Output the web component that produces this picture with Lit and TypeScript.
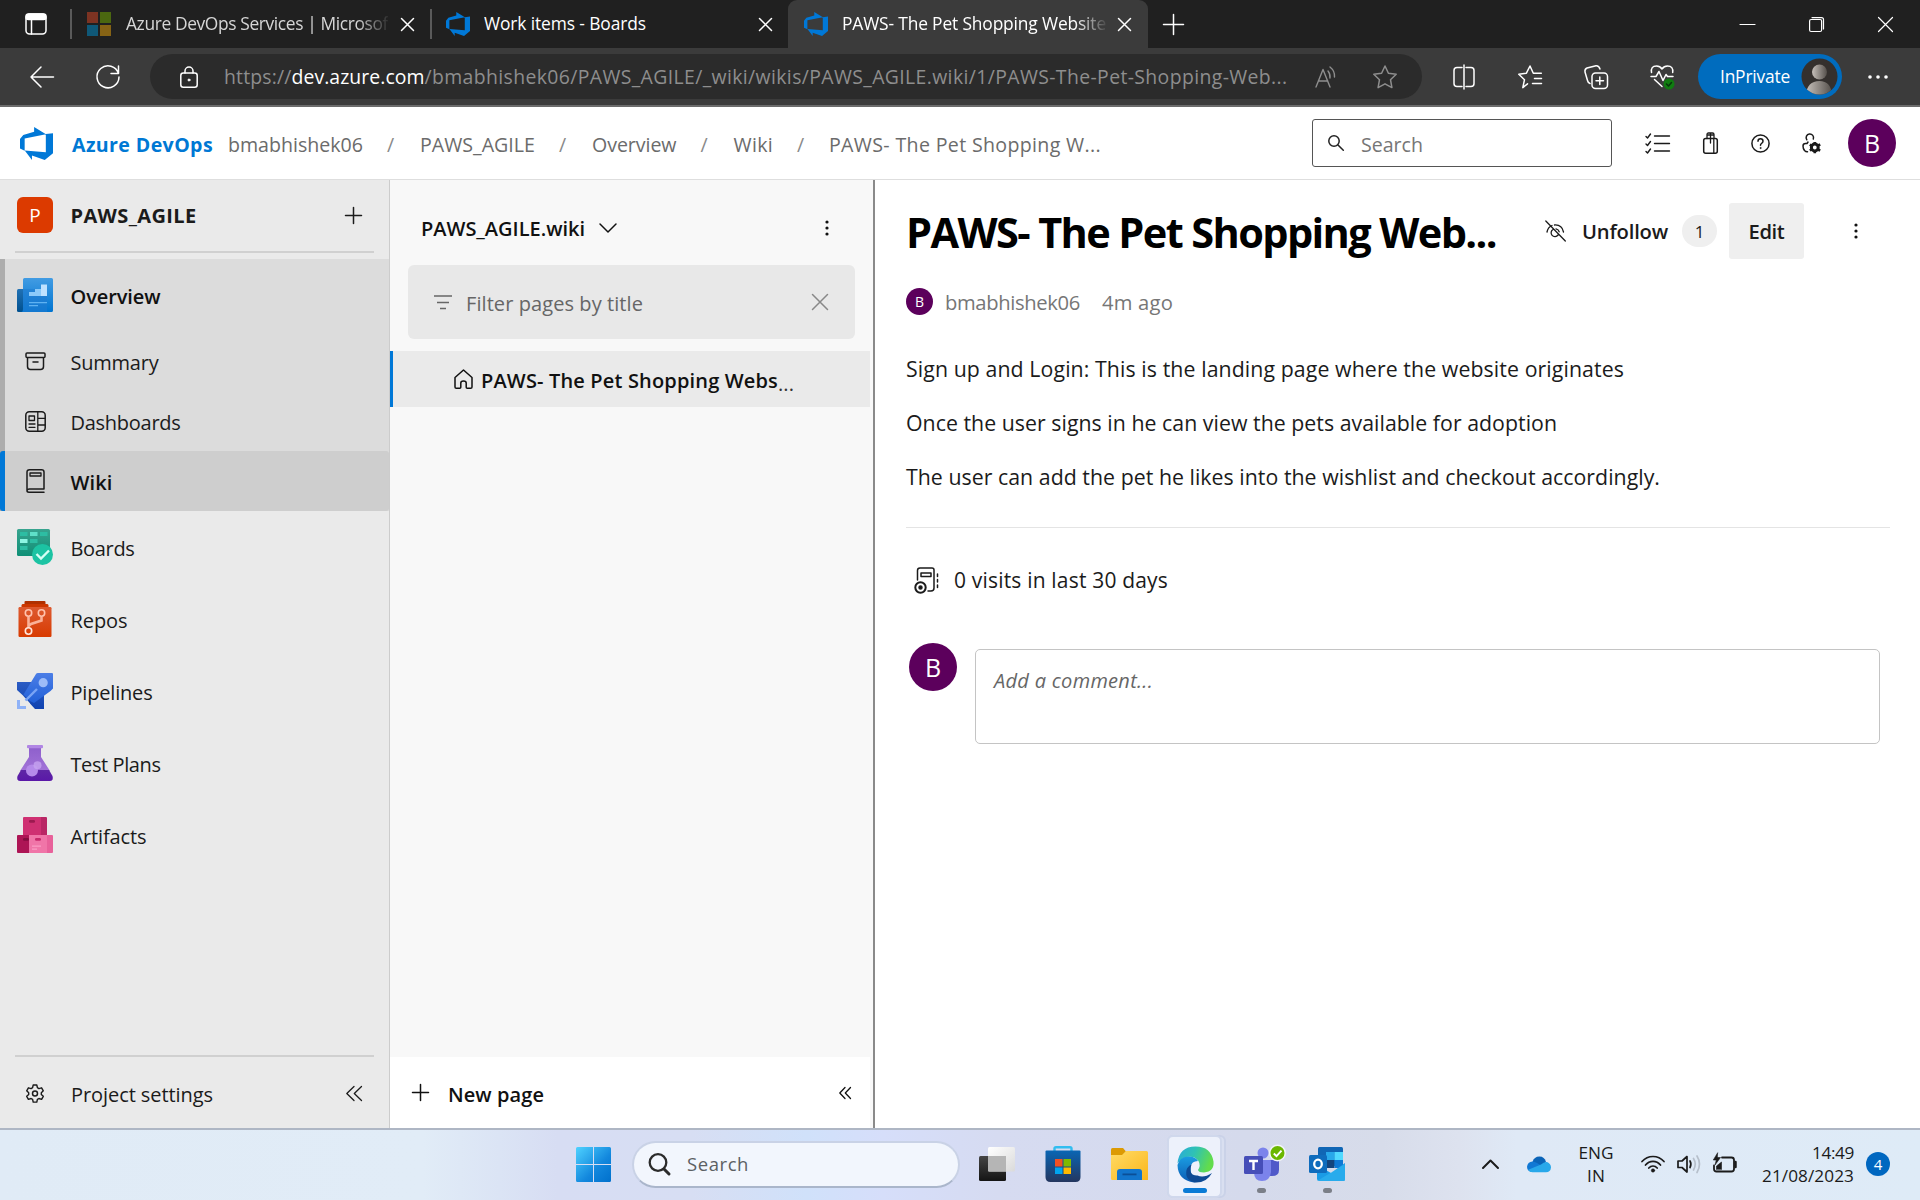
import { LitElement, html, svg, css } from "lit";
import { customElement, property } from "lit/decorators.js";

/** Single-line label whose tracking is tuned so that it fills `w` pixels. */
@customElement("ui-text")
class UiText extends LitElement {
  @property({ type: Number }) w = 0;
  static styles = css`
    :host { display: inline-block; flex: none; white-space: pre; line-height: 1.36; padding-top: 1px; }
    span { display: inline-block; }
  `;
  firstUpdated() {
    const span = this.renderRoot.querySelector("span") as HTMLElement;
    const count = (this.textContent ?? "").length;
    if (!this.w || !count) return;
    const natural = span.getBoundingClientRect().width;
    span.style.letterSpacing = `${(this.w - natural) / count}px`;
    this.style.width = `${this.w}px`;
  }
  render() {
    return html`<span><slot></slot></span>`;
  }
}

const shared = css`
  * { box-sizing: border-box; }
  :host { display: block; box-sizing: border-box; }
  svg { display: block; flex: none; overflow: visible; }
  .row { display: flex; align-items: center; }
  .ln { fill: none; stroke: currentColor; stroke-linecap: round; stroke-linejoin: round; }
`;

const icon = (w: number, h: number, body: unknown, cls = "") =>
  html`<svg class=${"ln " + cls} width=${w} height=${h} viewBox="0 0 ${w} ${h}" stroke-width="1.5">${body}</svg>`;

const devopsLogo = (size: number, cls = "") => html`
  <svg class=${cls} width=${size} height=${size} viewBox="1 1 16 16" fill="#0078d7">
    <path d="M17,4v9.74l-4,3.28-6.2-2.26V17L3.29,12.41l10.23.8V4.44Zm-3.41.49L7.85,1V3.29L2.58,4.84,1,6.87v4.61l2.26,1V6.57Z"></path>
  </svg>`;

const cross = (size: number, sw = 1.5) =>
  svg`<path stroke-width=${sw} d="M.5 .5L${size - 0.5} ${size - 0.5}M${size - 0.5} .5L.5 ${size - 0.5}"></path>`;

@customElement("browser-chrome")
class BrowserChrome extends LitElement {
  static styles = [shared, css`
    :host { color: #fff; background: #3b3b3b; height: 107px; border-bottom: 2px solid #6b6b6b; }
    .tabs { height: 48px; background: #202020; font-size: 17.4px; }
    .tabs ui-text { padding-top: 0; }
    .workspaces { margin-left: 25px; }
    .sep { width: 2px; height: 30px; background: #5a5a5a; }
    .sep.first { margin-left: 23px; }
    .tab { height: 48px; }
    .tab .fav { margin-right: 14px; }
    .tab ui-text { overflow: hidden; }
    .tab .close { margin-left: auto; }
    .tab.one { width: 358px; padding: 0 16px 0 15px; }
    .tab.one .fav { margin-right: 15px; }
    .tab.one ui-text { color: #d6d6d6; }
    .tab.two { width: 356px; padding: 0 16px 0 14px; }
    .tab.active { width: 360px; padding: 0 17px 0 16px; background: #3b3b3b; border-radius: 9px 9px 0 0; }
    .fade { -webkit-mask-image: linear-gradient(90deg, #000 88%, transparent 101%); }
    .plus { margin-left: 15px; }
    .min { margin-left: auto; }
    .restore { margin-left: 54px; }
    .shut { margin: 0 27px 0 54px; }
    .bar { height: 57px; }
    .back { margin-left: 30px; }
    .reload { margin: 0 30px 0 42px; }
    .omni { width: 1272px; height: 45px; border-radius: 23px; background: #2b2b2b; padding: 0 26px 0 30px; font-size: 19.4px; color: #8e8e8e; }
    .lock { margin-right: 26px; color: #fff; }
    .host { color: #fff; }
    .aloud { margin-left: 27px; }
    .star { margin-left: 36px; }
    .split { margin-left: 31px; }
    .favs { margin-left: 43px; }
    .coll { margin-left: 42px; }
    .heart { margin-left: 42px; }
    .pill { margin-left: 24px; width: 144px; height: 45px; border-radius: 23px; background: #006cbe; padding: 0 4px 0 22px; justify-content: space-between; font-size: 17.4px; }
    .dots { margin-left: 26px; }
  `];
  render() {
    return html`
      <div class="row tabs">
        ${icon(22, 22, svg`<rect x="1" y="1" width="20" height="20" rx="3.5"></rect><path d="M6.5 6v15"></path><rect x="1" y="1" width="20" height="5.500" rx="2.500" fill="#fff"></rect>`, "workspaces")}
        <div class="sep first"></div>
        <div class="row tab one">
          <svg class="fav" width="24" height="24" viewBox="0 0 24 24"><path fill="#7d3322" d="M0 0h11v11H0z"></path><path fill="#4b6710" d="M13 0h11v11H13z"></path><path fill="#0f5878" d="M0 13h11v11H0z"></path><path fill="#866315" d="M13 13h11v11H13z"></path></svg>
          <ui-text class="fade" .w=${262}>Azure DevOps Services | Microsof</ui-text>
          ${icon(13, 13, cross(13), "close")}
        </div>
        <div class="sep"></div>
        <div class="row tab two">${devopsLogo(24, "fav")}<ui-text .w=${162}>Work items - Boards</ui-text>${icon(13, 13, cross(13), "close")}</div>
        <div class="row tab active">${devopsLogo(24, "fav")}<ui-text class="fade" .w=${264}>PAWS- The Pet Shopping Website</ui-text>${icon(13, 13, cross(13), "close")}</div>
        ${icon(21, 21, svg`<path d="M10.500 0.500v20M0.500 10.500h20"></path>`, "plus")}
        ${icon(15, 15, svg`<path stroke-width="1.200" d="M0 7.500h15"></path>`, "min")}
        ${icon(15, 15, svg`<rect x=".6" y="2.500" width="12" height="12" rx="1.500" stroke-width="1.200"></rect><path stroke-width="1.200" d="M3 .6h9.500q2 0 2 2V12"></path>`, "restore")}
        ${icon(15, 15, cross(15, 1.2), "shut")}
      </div>
      <div class="row bar">
        ${icon(24, 22, svg`<path d="M23.500 11H1M11 1L1 11l10 10"></path>`, "back")}
        ${icon(24, 24, svg`<path d="M22.500 8.500A11 11 0 1 0 23 12M22.500 1v7.500H15"></path>`, "reload")}
        <div class="row omni">
          ${icon(18, 22, svg`<rect x=".8" y="7" width="16.400" height="14.200" rx="2.500"></rect><path d="M5 7V5a4 4 0 0 1 8 0v2"></path><circle cx="9" cy="14" r="1" fill="#fff" stroke-width="1"></circle>`, "lock")}
          <ui-text .w=${67.5}>https://</ui-text><ui-text class="host" .w=${133}>dev.azure.com</ui-text><ui-text .w=${863}>/bmabhishek06/PAWS_AGILE/_wiki/wikis/PAWS_AGILE.wiki/1/PAWS-The-Pet-Shopping-Web...</ui-text>
          ${icon(22, 22, svg`<path stroke-width="1.400" d="M1 21L8 3.500 15 21M3.300 15h9.500M13 5q2.500 3 2 7M15 1q5 4 4.500 10"></path>`, "aloud")}
          ${icon(24, 24, svg`<path d="M12 1l3.400 7.200 7.800 1-5.700 5.500 1.400 7.900L12 18.800l-6.900 3.800 1.400-7.900L.8 9.200l7.800-1z"></path>`, "star")}
        </div>
        ${icon(22, 24, svg`<path d="M9 2.500H4Q1 2.500 1 5.500v13q0 3 3 3h5M13 2.500h5q3 0 3 3v13q0 3-3 3h-5M11 0v24"></path>`, "split")}
        ${icon(24, 24, svg`<path d="M9.500 18.800L4.800 22.600l1.700-7.900L.8 9.200l7.600-1L12 1l3.300 7.200h8M16.500 13.500h7M14.500 18.500h9"></path>`, "favs")}
        ${icon(24, 24, svg`<rect x="8" y="8" width="15.500" height="15.500" rx="3.500"></rect><path d="M15.800 12v7.500M12 15.800h7.500M6 18.500Q4 18 3.500 15.500L1 7q-.5-3 2-4l9-2.300Q15 .5 16 4"></path>`, "coll")}
        ${icon(24, 25, svg`<path d="M1.500 8.500Q.5 2 6.500 2 10 2 12 5q2-3 5.500-3 6 0 5.200 6.500M1 12.500h5l3-5 4 9 3-6 1.500 2h5.500M4.500 15.500L12 22.500"></path><circle cx="19" cy="20" r="5.500" fill="#107c10" stroke="none"></circle><path d="M16.500 20l2 2 3-3.500" stroke="#07350a"></path>`, "heart")}
        <div class="row pill">
          <ui-text .w=${70}>InPrivate</ui-text>
          <svg width="37" height="37" viewBox="0 0 37 37">
            <defs><linearGradient id="ag"><stop offset="0" stop-color="#c6c0ba"></stop><stop offset="1" stop-color="#55504b"></stop></linearGradient><clipPath id="ac"><circle cx="18.500" cy="18.500" r="18"></circle></clipPath></defs>
            <circle cx="18.500" cy="18.500" r="18" fill="#34302d"></circle>
            <g clip-path="url(#ac)" fill="url(#ag)"><circle cx="18.500" cy="14" r="7.500"></circle><path d="M5 37q1-14 13.500-14Q30 23 31 37z"></path></g>
          </svg>
        </div>
        ${icon(20, 4, svg`<g fill="#fff" stroke="none"><circle cx="2" cy="2" r="1.800"></circle><circle cx="10" cy="2" r="1.800"></circle><circle cx="18" cy="2" r="1.800"></circle></g>`, "dots")}
      </div>`;
  }
}

@customElement("devops-header")
class DevopsHeader extends LitElement {
  static styles = [shared, css`
    :host { height: 73px; border-bottom: 1px solid #dedede; background: #fff; color: #6b6b6b; font-size: 19.6px; }
    .row { height: 72px; }
    ui-text { padding-top: 4px; }
    .logo { margin: 0 19px 0 20px; }
    .brand { color: #0078d4; font-weight: 700; margin-right: 15px; }
    .sl { margin: 0 24px; color: #8a8a8a; }
    .sl.last { margin-right: 23px; }
    .find { width: 300px; height: 48px; border: 1px solid #555; border-radius: 3px; margin-left: auto; padding-left: 15px; color: #767676; }
    .find svg { color: #222; margin-right: 17px; }
    .ic { color: #1a1a1a; }
    .list { margin-left: 33px; }
    .bag { margin-left: 33px; }
    .help { margin-left: 33px; }
    .user { margin-left: 32px; }
    .me { width: 48px; height: 48px; border-radius: 50%; background: #5c005c; color: #fff; margin: 0 24px 0 27px; display: grid; place-items: center; font-size: 25px; }
  `];
  render() {
    const sl = html`<ui-text class="sl" .w=${9}>/</ui-text>`;
    return html`<div class="row">
      ${devopsLogo(33, "logo")}
      <ui-text class="brand" .w=${141}>Azure DevOps</ui-text>
      <ui-text .w=${135}>bmabhishek06</ui-text>${sl}
      <ui-text .w=${115}>PAWS_AGILE</ui-text>${sl}
      <ui-text .w=${84.5}>Overview</ui-text>${sl}
      <ui-text .w=${39.5}>Wiki</ui-text><ui-text class="sl last" .w=${9}>/</ui-text>
      <ui-text .w=${272}>PAWS- The Pet Shopping W...</ui-text>
      <div class="row find">
        ${icon(16, 16, svg`<circle cx="6" cy="6" r="5.200"></circle><path d="M10 10l5.300 5.300"></path>`)}
        <ui-text .w=${62}>Search</ui-text>
      </div>
      ${icon(25, 20, svg`<path stroke-width="1.400" d="M9.500 3h15M9.500 10.500h15M9.500 18h15M1 3.500l1.500 1.500 3-4M1 11l1.500 1.500 3-4M1 18.500L2.500 20l3-4"></path>`, "ic list")}
      ${icon(15, 22, svg`<rect x=".7" y="6.500" width="13.600" height="14.700" rx="2"></rect><path stroke-width="1.300" d="M4 6.500V2.500Q4 1 5.500 1h4Q11 1 11 2.500v4M7.500 1v10M5 3h5M10.800 7v14"></path>`, "ic bag")}
      ${icon(19, 19, svg`<circle cx="9.500" cy="9.500" r="8.600"></circle><path d="M7 7.300Q7 4.800 9.500 4.800T12 7.200Q12 8.500 10.500 9.500 9.500 10.200 9.500 11.300"></path><circle cx="9.500" cy="14" r=".6" fill="#1a1a1a" stroke-width=".6"></circle>`, "ic help")}
      ${icon(19, 21, svg`<path d="M4.800 6.800a3.700 3.700 0 1 1 6.500-.8M6 9L5 10.500H3.500Q1 10.500 1 13t1.500 4.500Q4 19 5.500 18.800"></path><circle cx="12.800" cy="14.500" r="3.400" stroke-width="3"></circle><path stroke-width="2.600" stroke-linecap="butt" d="M12.800 9v2M12.800 18v2.300M7.800 11.700l2 1.200M16 16.500l2.200 1.200M7.800 17.500l2-1.200M16 12.700l2.200-1.300"></path>`, "ic user")}
      <div class="me">B</div>
    </div>`;
  }
}

const grad = (id: string, a: string, b: string) =>
  svg`<linearGradient id=${id} x1="0" y1="0" x2="0" y2="1"><stop offset="0" stop-color=${a}></stop><stop offset="1" stop-color=${b}></stop></linearGradient>`;
const hub = (body: unknown) => html`<svg width="36" height="36" viewBox="0 0 36 36">${body}</svg>`;

const hubIcons = {
  overview: hub(svg`<defs>${grad("o1", "#429ce3", "#0074d0")}${grad("o2", "#2171b4", "#00508f")}</defs>
    <path fill="url(#o2)" d="M0 13.500q0-1.500 1.500-1.500H8v23H1.500Q0 35 0 33.500z"></path><path fill="url(#o1)" d="M6 2.500Q6 1 7.500 1h27Q36 1 36 2.500v31q0 1.500-1.500 1.500h-30Q6 34.500 6 32z"></path>
    <path fill="#1f7cd0" opacity=".6" d="M6 12h12v7h12v16H6z"></path>
    <path fill="#8ccaf9" d="M12 15h6v-3h6v7H12z"></path><path fill="#bfe2ff" d="M24 7.500h6V19h-6z"></path><path fill="#8ccaf9" d="M18 12h6v7h-6z"></path><path fill="#5fb2f2" d="M12 25h18v1.200H12zM12 28h9v1.200h-9z"></path>`),
  boards: hub(svg`<defs>${grad("b1", "#38a48f", "#0f8f76")}</defs><rect width="33" height="27" rx="1.500" fill="url(#b1)"></rect>
    <path fill="#2dbda3" d="M3 3h7.500v4H3zM23 3h7.500v4H23zM13 10h7.500v4H13zM3 17h7.500v4H3z"></path><path fill="#5fe0c8" d="M13 3h7.500v4H13z"></path><path fill="#8cf5e2" d="M3 10h7.500v4H3z"></path>
    <circle cx="25.500" cy="25.500" r="10.500" fill="#1cc3a3"></circle><path fill="none" stroke="#d5fff5" stroke-width="2.400" d="M19.500 25l4.500 4.500 8-8"></path>`),
  repos: hub(svg`<defs>${grad("r1", "#dd5a30", "#d83b01")}</defs><path fill="#b03000" d="M8.500 0h19q1 0 1 1v2.500h-21V1q0-1 1-1z"></path><path fill="#cc3700" d="M5.500 3h25l1 1v3h-27V4z"></path><rect x="1.500" y="6" width="33" height="30" rx="1.200" fill="url(#r1)"></rect>
    <g fill="none" stroke="#ffc3ae" stroke-width="1.600"><path stroke-width="2.600" opacity=".85" d="M11.500 16v10.500M11.500 25l2.500-2 10.500-3.500V16"></path><circle cx="11.500" cy="12" r="3.200"></circle><circle cx="24.500" cy="12" r="3.200"></circle><circle cx="11.500" cy="30" r="3.200" stroke="#ffe6dc"></circle></g>`),
  pipelines: hub(svg`<defs>${grad("p1", "#4c7ee6", "#2160d8")}${grad("p2", "#2b5cc4", "#0f42b0")}</defs>
    <path fill="url(#p2)" d="M0 9h15l10 13 2 0v14h-9l-5.500-6L9 26l-3-3.500L0 17z"></path><path fill="#eaeaea" d="M4.500 23.500L9 26l4 4.500-3 3L6.500 31z"></path>
    <path fill="url(#p1)" d="M19 1q.5-1 2-1h14q1 0 1 1v14.500L33.500 18 17 30 13 28 6.500 21.500z"></path>
    <circle cx="26.200" cy="9.700" r="4.600" fill="#9dbcf8"></circle><path stroke="#7aa4f5" stroke-width="2.400" d="M8.500 27.500L20 16"></path><path fill="#8fb2f7" d="M0 27h3v6h6v3H0z"></path>`),
  tests: hub(svg`<defs>${grad("t1", "#8e5fcc", "#a273d8")}${grad("t2", "#5e27a5", "#5a18a8")}</defs>
    <path fill="url(#t1)" d="M12 2h12v10l9 14H3l9-14z"></path><rect x="10" width="16" height="3.200" rx="1" fill="#b186e4"></rect><path fill="url(#t2)" d="M4 25h28l3.500 6q1.500 5-3 5H3.500Q-1 36 .5 31z"></path>
    <circle cx="15" cy="25.500" r="6" fill="#b58aea"></circle><circle cx="20.500" cy="20.300" r="4" fill="#c7a4f0" opacity=".8"></circle>`),
  artifacts: hub(svg`<path fill="#cf3072" d="M6 1q0-1 1-1h17v18H6z"></path><path fill="#b92765" d="M24 0h5q1 0 1 1v17h-6z"></path><rect x="12" y="3" width="6" height="2.800" rx="1.200" fill="#9c1a50"></rect>
    <path fill="#ad1555" d="M0 19q0-1 1-1h11v18H1q-1 0-1-1z"></path><path fill="#f075a8" d="M12 18h18v18H12z"></path><path fill="#e8619a" d="M30 18h5q1 0 1 1v16q0 1-1 1h-5z"></path>
    <rect x="6" y="21" width="6" height="2.800" rx="1.200" fill="#820d3f"></rect><rect x="18" y="21" width="6" height="2.800" rx="1.200" fill="#c72a6c"></rect><path fill="#fa9cc4" d="M15 28.500h9v1.300h-9zM15 31.500h5v1.300h-5z"></path>`),
};

const subIcons = {
  summary: icon(21, 18, svg`<path d="M2 1h17q1 0 1 1v2.500q0 1-1 1H2q-1 0-1-1V2q0-1 1-1zM2.500 5.500v9q0 3 3 3h10q3 0 3-3v-9M8 10h5"></path>`),
  dashboards: icon(21, 21, svg`<rect x=".8" y=".8" width="19.400" height="19.400" rx="3.500"></rect><path stroke-width="1.300" d="M12.800 1v19M13 7.300h7M13 14h7M4 5h5.500v4.500H4zM4 13h6M4 16.300h6"></path>`),
  wiki: icon(21, 24, svg`<path d="M19 20H4.500Q2 20 2 21.800 2 23.300 4 23.300H19M2 21.500V3Q2 .8 4.500 .8h12Q19 .8 19 3v17"></path><rect x="5" y="4" width="11" height="3" stroke-width="1.300"></rect>`),
};

const chevrons = (w: number, h: number) =>
  icon(w, h, svg`<path stroke-width="1.300" d="M${w / 2} .5L.8 ${h / 2} ${w / 2} ${h - 0.5}M${w - 0.5} .5L${w / 2 + 0.3} ${h / 2} ${w - 0.5} ${h - 0.5}"></path>`, "chev");

@customElement("project-nav")
class ProjectNav extends LitElement {
  static styles = [shared, css`
    :host { display: flex; flex: none; flex-direction: column; width: 390px; background: #eaeaea; border-right: 1px solid #ccc; color: #1b1b1b; font-size: 20px; }
    .head { height: 71px; padding: 0 27px 1px 17px; }
    .tile { width: 36px; height: 36px; border-radius: 6px; background: #dc3a00; color: #fff; display: grid; place-items: center; margin-right: 17.5px; font-size: 19px; }
    .name { font-weight: 700; padding-top: 2px; }
    .head .ln { margin-left: auto; }
    .rule { height: 2px; background: #d0d0d0; margin: 0 15px; }
    .group { margin-top: 6px; background: #dcdcdc; border-left: 5px solid #adadad; }
    .hub { height: 72px; padding-left: 17px; gap: 17.5px; }
    .hub ui-text, .sub ui-text { padding-top: 3px; }
    .group .hub { padding-left: 12px; }
    .strong { font-weight: 600; color: #111; }
    .sub { height: 60px; }
    .slot { width: 65.5px; padding-left: 20px; }
    .on { margin-left: -5px; border-left: 5px solid #0078d7; background: #cecece; border-radius: 3px; }
    .foot { margin-top: auto; }
    .foot .rule { margin-bottom: 1px; }
    .settings { height: 70px; padding: 0 27px 0 26px; gap: 27px; }
    .settings ui-text { padding-top: 3px; }
    .settings .chev { margin-left: auto; }
  `];
  render() {
    const subs: [unknown, string, number, boolean][] = [
      [subIcons.summary, "Summary", 88, false],
      [subIcons.dashboards, "Dashboards", 110, false],
      [subIcons.wiki, "Wiki", 42, true],
    ];
    const hubs: [unknown, string, number][] = [
      [hubIcons.boards, "Boards", 64],
      [hubIcons.repos, "Repos", 57],
      [hubIcons.pipelines, "Pipelines", 82],
      [hubIcons.tests, "Test Plans", 90],
      [hubIcons.artifacts, "Artifacts", 76],
    ];
    return html`
      <div class="row head"><div class="tile">P</div><ui-text class="name" .w=${126}>PAWS_AGILE</ui-text>
        ${icon(17, 17, svg`<path d="M8.500 .5v16M.5 8.500h16"></path>`)}</div>
      <div class="rule"></div>
      <div class="group">
        <div class="row hub">${hubIcons.overview}<ui-text class="strong" .w=${90}>Overview</ui-text></div>
        ${subs.map(([i, t, w, on]) => html`<div class=${"row sub" + (on ? " on" : "")}><div class="slot">${i}</div><ui-text class=${on ? "strong" : ""} .w=${w}>${t}</ui-text></div>`)}
      </div>
      ${hubs.map(([i, t, w]) => html`<div class="row hub">${i}<ui-text .w=${w}>${t}</ui-text></div>`)}
      <div class="foot">
        <div class="rule"></div>
        <div class="row settings">
          ${icon(18, 19, svg`<path stroke-width="1.400" d="M7.200 1h3.600l.6 2.700 1.500.9 2.700-.8 1.700 3-2 1.900v1.700l2 1.900-1.700 3-2.700-.8-1.500.9-.6 2.700H7.200l-.6-2.700-1.500-.9-2.700.8-1.700-3 2-1.900V8.700l-2-1.900 1.700-3 2.700.8 1.500-.9z"></path><circle cx="9" cy="9.600" r="2.500"></circle>`)}
          <ui-text .w=${142}>Project settings</ui-text>${chevrons(16, 15)}
        </div>
      </div>`;
  }
}

@customElement("wiki-tree")
class WikiTree extends LitElement {
  static styles = [shared, css`
    :host { display: flex; flex: none; flex-direction: column; width: 485px; background: #f8f8f8; border-right: 2px solid #8a8a8a; color: #111; font-size: 20px; font-weight: 600; }
    .head { height: 85px; padding: 11px 44px 0 31px; gap: 14px; }
    .head .dots { margin-left: auto; }
    .filter { margin: 0 18px; height: 74px; border-radius: 6px; background: #e8e8e8; color: #666; padding: 0 27px 0 26px; font-weight: 400; gap: 14px; }
    .filter ui-text { padding-top: 3px; }
    .filter .x { margin-left: auto; color: #888; }
    .page { margin: 12px 3px 0 0; height: 56px; background: #eaeaea; border-left: 3px solid #0078d7; padding-left: 61px; gap: 8px; }
    .page ui-text { padding-top: 3px; }
    .page .more { font-weight: 400; margin-left: -8px; color: #333; padding-top: 9px; }
    .foot { margin: auto 3px 0 0; height: 71px; background: #fff; padding: 0 19px 0 22px; gap: 19px; }
    .foot ui-text { padding-top: 4px; }
    .foot .chev { margin-left: auto; }
  `];
  render() {
    return html`
      <div class="row head"><ui-text .w=${164}>PAWS_AGILE.wiki</ui-text>
        ${icon(18, 10, svg`<path d="M1 1l8 8 8-8"></path>`)}
        ${icon(4, 16, svg`<g fill="#111" stroke="none"><circle cx="2" cy="2" r="1.600"></circle><circle cx="2" cy="8" r="1.600"></circle><circle cx="2" cy="14" r="1.600"></circle></g>`, "dots")}</div>
      <div class="row filter">
        ${icon(18, 14, svg`<path stroke-linecap="butt" d="M0 1h18M3 7.500h12M6 13.500h6"></path>`)}
        <ui-text .w=${177}>Filter pages by title</ui-text>${icon(16, 16, cross(16), "x")}
      </div>
      <div class="row page">
        ${icon(19, 20, svg`<path d="M1 8.500L9.500 1 18 8.500V18q0 1.300-1.300 1.300h-3.500q-1 0-1-1V14q0-2-2.700-2T6.800 14v4.300q0 1-1 1H2.300Q1 19.300 1 18z"></path>`)}
        <ui-text .w=${297}>PAWS- The Pet Shopping Webs</ui-text><ui-text class="more" .w=${16}>...</ui-text>
      </div>
      <div class="row foot">
        ${icon(17, 17, svg`<path d="M8.500 .5v16M.5 8.500h16"></path>`)}
        <ui-text .w=${96}>New page</ui-text>${chevrons(12, 12)}
      </div>`;
  }
}

@customElement("wiki-page")
class WikiPage extends LitElement {
  static styles = [shared, css`
    :host { flex: 1; background: #fff; color: #1b1b1b; font-size: 20.2px; padding: 23px 30px 0 31px; }
    .top { height: 56px; }
    .title { font-size: 41.5px; font-weight: 700; color: #000; padding-top: 2px; }
    .eye { margin-left: 49px; }
    .b6 { font-weight: 600; margin-left: 16px; padding-top: 2px; }
    .count { margin-left: 14px; width: 35px; height: 32px; border-radius: 16px; background: #efefef; display: grid; place-items: center; font-size: 17px; }
    .edit { margin-left: 12px; width: 75px; height: 56px; border-radius: 3px; background: #efefef; font-weight: 600; display: grid; place-items: center; }
    .edit ui-text { padding-top: 2px; }
    .dots { margin-left: 50px; }
    .by { margin-top: 26px; height: 32px; color: #767676; }
    .who { width: 27px; height: 27px; border-radius: 50%; background: #5c005c; color: #fff; display: grid; place-items: center; font-size: 14px; margin-right: 12px; }
    .when { margin-left: 22px; }
    .by ui-text { padding-top: 4px; }
    .body { margin-top: 37px; font-size: 21.3px; }
    .line { height: 54px; }
    .rule { height: 1px; background: #e4e4e4; margin-top: 11px; }
    .visits { margin-top: 36px; height: 32px; padding-left: 8px; gap: 15px; font-size: 21px; }
    .add { display: flex; margin-top: 47px; padding-left: 3px; }
    .me { width: 48px; height: 48px; border-radius: 50%; background: #5c005c; color: #fff; display: grid; place-items: center; font-size: 25px; }
    .box { margin: 6px 10px 0 18px; flex: 1; height: 95px; border: 1px solid #c4c4c4; border-radius: 5px; padding: 16px 18px; color: #666; font-style: italic; font-size: 20px; }
  `];
  render() {
    return html`
      <div class="row top">
        <ui-text class="title" .w=${590}>PAWS- The Pet Shopping Web...</ui-text>
        ${icon(21, 22, svg`<path stroke-width="1.300" d="M.8 1l19.500 20M2 12Q3 7 7 5.500M9.500 5Q17 4.500 18.500 12M8 9.500a3.800 3.800 0 1 0 5 5.500M11 8.800q2.500.5 3.200 3"></path>`, "eye")}
        <ui-text class="b6" .w=${86}>Unfollow</ui-text>
        <div class="count">1</div>
        <div class="edit"><ui-text .w=${36}>Edit</ui-text></div>
        ${icon(4, 16, svg`<g fill="#111" stroke="none"><circle cx="2" cy="2" r="1.600"></circle><circle cx="2" cy="8" r="1.600"></circle><circle cx="2" cy="14" r="1.600"></circle></g>`, "dots")}
      </div>
      <div class="row by"><div class="who">B</div><ui-text .w=${135}>bmabhishek06</ui-text><ui-text class="when" .w=${71}>4m ago</ui-text></div>
      <div class="body">
        <div class="line"><ui-text .w=${718}>Sign up and Login: This is the landing page where the website originates</ui-text></div>
        <div class="line"><ui-text .w=${651}>Once the user signs in he can view the pets available for adoption</ui-text></div>
        <div class="line"><ui-text .w=${754}>The user can add the pet he likes into the wishlist and checkout accordingly.</ui-text></div>
      </div>
      <div class="rule"></div>
      <div class="row visits">
        ${icon(25, 26, svg`<path d="M3.500 13V3.500Q3.500 1 6 1h12q2 0 2 2v18q0 3-3 3h-3"></path><rect x="7" y="6" width="10" height="3.500"></rect><path d="M23.500 7v2.500M23.500 12.500V15M23.500 18v2.500"></path><circle cx="6.500" cy="20.500" r="5.200" stroke-width="2"></circle><circle cx="6.500" cy="20.500" r="1.500" fill="#111"></circle>`)}
        <ui-text .w=${214}>0 visits in last 30 days</ui-text>
      </div>
      <div class="add"><div class="me">B</div><div class="box"><ui-text .w=${159}>Add a comment...</ui-text></div></div>`;
  }
}

@customElement("task-bar")
class TaskBar extends LitElement {
  static styles = [shared, css`
    :host { height: 72px; border-top: 2px solid #aeb6c4; color: #1b1b1b;
      background: linear-gradient(90deg, #e0ebf6 0, #e1ecf7 22%, #dbe4f5 26%, #d7ddf3 29%, #d7def3 36%, #d0e1fa 42%, #d6defa 46%, #d6dbf1 52%, #d5daec 65%, #d7dcea 72%, #dde2ef 76%, #dfe9f6 79%, #deebf7 100%); }
    .bar { height: 68px; }
    .win { margin-left: 576px; }
    .find { margin-left: 21px; width: 328px; height: 47px; border-radius: 24px; background: #f2f6fd; border: 2px solid #c9d2e6; border-bottom-color: #aab6cb; padding-left: 14px; gap: 16px; font-size: 18.5px; color: #5c5f63; }
    .find ui-text { padding-top: 0; }
    .apps { gap: 30px; margin-left: 19px; }
    .slot { height: 68px; width: 36px; display: flex; flex-direction: column; align-items: center; justify-content: center; position: relative; }
    .slot.hot::before { content: ""; position: absolute; left: -10px; top: 5px; width: 55px; height: 59px; background: #d9dff0; border: 2px solid #cad2e8; border-radius: 6px; }
    .slot.hot::after { content: ""; position: absolute; left: -10px; top: 5px; width: 51px; height: 59px; background: #edf1fb; border: 2px solid #d0d8ec; border-radius: 6px; }
    .slot svg { z-index: 1; }
    .slot .teams { margin-left: 5px; }
    .pip { position: absolute; bottom: 5px; width: 9px; height: 5px; border-radius: 3px; background: #7b7f88; z-index: 1; }
    .hot .pip { width: 24px; background: #0a7bd6; }
    .up { margin-left: auto; }
    .cloud { margin: 0 28px; }
    .lang { font-size: 17.200px; text-align: center; line-height: 23px; width: 34px; margin-right: 28px; display: flex; flex-direction: column; align-items: center; }
    .lang ui-text, .time ui-text { line-height: 23px; padding: 0; }
    .time { padding-bottom: 1px; }
    .vol { margin: 0 12px; }
    .time { font-size: 17.200px; width: 92px; margin: 0 12px 0 24px; display: flex; flex-direction: column; align-items: flex-end; }
    .badge { width: 24px; height: 24px; border-radius: 50%; background: #0067c0; color: #fff; display: grid; place-items: center; font-size: 15px; margin-right: 30px; }
  `];
  render() {
    return html`<div class="row bar">
      <svg class="win" width="35" height="35" viewBox="0 0 35 35"><defs><linearGradient id="w" x1="0" y1="0" x2="1" y2="1"><stop offset="0" stop-color="#4fd2ff"></stop><stop offset=".6" stop-color="#1287dd"></stop><stop offset="1" stop-color="#0070cc"></stop></linearGradient></defs>
        <path fill="url(#w)" d="M1.500 0H17v17H0V1.500Q0 0 1.500 0zM18 0h15.500Q35 0 35 1.500V17H18zM0 18h17v17H1.500Q0 35 0 33.500zM18 18h17v15.500q0 1.500-1.500 1.500H18z"></path></svg>
      <div class="row find">
        ${icon(23, 23, svg`<circle cx="10" cy="9.500" r="8.300" stroke="#2b2b2b" stroke-width="2.300"></circle><path stroke="#2b2b2b" stroke-width="3" d="M16 16l5 5"></path>`)}
        <ui-text .w=${62}>Search</ui-text>
      </div>
      <div class="row apps">
        <div class="slot"><svg width="36" height="36" viewBox="0 0 36 36"><defs><linearGradient id="k1" x1="0" y1="0" x2="0" y2="1"><stop offset="0" stop-color="#454545"></stop><stop offset="1" stop-color="#141414"></stop></linearGradient><linearGradient id="k2" x1="0" y1="0" x2="1" y2="1"><stop offset="0" stop-color="#fff"></stop><stop offset="1" stop-color="#dadada"></stop></linearGradient></defs>
          <rect y="10" width="27" height="25" rx="1.500" fill="url(#k1)"></rect><rect x="9" y="1" width="27" height="24.500" rx="1.500" fill="url(#k2)"></rect><path fill="#b5b5b5" d="M9 10h18v15.500H10q-1 0-1-1z"></path></svg></div>
        <div class="slot"><svg width="36" height="36" viewBox="0 0 36 36"><defs><linearGradient id="s1" x1="0" y1="0" x2="0" y2="1"><stop offset="0" stop-color="#0a66b4"></stop><stop offset="1" stop-color="#24365f"></stop></linearGradient></defs>
          <path fill="none" stroke="#31bdf0" stroke-width="2.400" d="M9.500 7V2.500Q9.500 1.200 11 1.200h14q1.500 0 1.500 1.300V7"></path><path fill="url(#s1)" d="M1.500 4.500h33q1 0 1 1V31q0 5-5 5h-25Q.5 36 .5 31V5.500q0-1 1-1z"></path>
          <path fill="#f25022" d="M10 13h7.500v7.500H10z"></path><path fill="#7fba00" d="M18.500 13H26v7.500h-7.500z"></path><path fill="#00a4ef" d="M10 21.500h7.500V28H10z"></path><path fill="#ffb900" d="M18.500 21.500H26V28h-7.500z"></path></svg></div>
        <div class="slot"><svg width="37" height="36" viewBox="0 0 37 36"><defs><linearGradient id="f1" x1="0" y1="0" x2="1" y2="1"><stop offset="0" stop-color="#ffdb66"></stop><stop offset="1" stop-color="#fbb61a"></stop></linearGradient></defs>
          <path fill="#dc9a04" d="M0 3.500Q0 2 1.500 2H12l3 3.500L12 9H0z"></path><path fill="url(#f1)" d="M0 9h11l4-4h20.500Q37 5 37 6.500V34H1.500Q0 34 0 32.500z"></path><path fill="#1275cc" d="M6 34v-8q0-3 3-3h19q3 0 3 3v8z"></path><path fill="#0b4f96" d="M11.500 27.500h14v1.800h-14z"></path></svg></div>
        <div class="slot hot"><svg width="37" height="37" viewBox="0 0 37 37"><defs>
            <linearGradient id="e1" x1="0" y1="0" x2="1" y2=".3"><stop offset="0" stop-color="#2aa9dc"></stop><stop offset=".5" stop-color="#2fc2b4"></stop><stop offset="1" stop-color="#62dc4c"></stop></linearGradient>
            <linearGradient id="e2" x1="0" y1="0" x2="0" y2="1"><stop offset="0" stop-color="#1b9de2"></stop><stop offset="1" stop-color="#0c5cb4"></stop></linearGradient></defs>
          <path fill="url(#e1)" d="M.5 17.500Q2 .5 18.500 .5 34 .5 36.500 15.500 37.500 25.500 27 26.500 21.500 26.500 21 24 24 19.500 21.500 15 17.500 9.500 10 11 3.500 12.500 .5 17.500z"></path>
          <path fill="url(#e2)" d="M.5 19Q2.500 10.500 12 10.500q6.500 0 9 4.500Q14.500 15 13.500 21q-1 8 6.500 13.500-1 2-3 1.900Q1 34.500 .5 19z"></path>
          <path fill="#0d4a94" d="M14.500 18.500Q11 30 20.500 29.500q6 3 14.500-2.500Q29.500 37 18 36.500 7.500 34 9.500 24q1-3.500 5-5.500z"></path></svg><div class="pip"></div></div>
        <div class="slot"><svg class="teams" width="42" height="37" viewBox="0 0 42 37">
          <circle cx="20" cy="7" r="5.500" fill="#7b83eb"></circle><path fill="#5059c9" d="M26 14h9q1 0 1 1v9q0 6-7 6h-3z"></path><path fill="#7b83eb" d="M11 14h16q1 0 1 1v11q-1 9-9 9t-8-9z"></path>
          <rect x="1" y="10" width="19" height="18" rx="1.500" fill="#464eb8"></rect><path stroke="#fff" stroke-width="2.400" fill="none" d="M6 15h9M10.500 15v9"></path>
          <circle cx="34.500" cy="7" r="8.500" fill="#f3f5f8"></circle><circle cx="34.500" cy="7" r="7" fill="#6bb700"></circle><path fill="none" stroke="#fff" stroke-width="1.900" d="M30.800 7.500l2.700 2.700 5-5.500"></path></svg><div class="pip"></div></div>
        <div class="slot"><svg width="36" height="36" viewBox="0 0 36 36">
          <path fill="#1066b5" d="M9 2.500Q9 1 10.500 1h22Q34 1 34 2.500V20H9z"></path><path fill="#28a8ea" d="M17 6h8.500v8H17z"></path><path fill="#50d9ff" d="M25.500 6H34v8h-8.500z"></path><path fill="#0364b8" d="M9 14h8.500v9H9z"></path><path fill="#14447d" d="M17 14h8.500v8H17z"></path><path fill="#0f78d4" d="M25.500 14H34v8h-8.500z"></path>
          <path fill="#1a9be6" d="M36 17v16.500q0 1.500-1.500 1.500h-24Q8 35 8 33V19l14 8z"></path><path fill="#35b8f1" d="M8 35L36 18v15.500q0 1.500-1.500 1.500z" opacity=".55"></path>
          <rect x="0" y="9" width="18" height="18" rx="1.500" fill="#0f6cbd"></rect><ellipse cx="9" cy="18" rx="3.800" ry="4.300" fill="none" stroke="#fff" stroke-width="2.300"></ellipse></svg><div class="pip"></div></div>
      </div>
      ${icon(17, 10, svg`<path stroke-width="2" d="M1 9l7.500-7.500L16 9"></path>`, "up")}
      <svg class="cloud" width="24" height="17" viewBox="0 0 24 17"><path fill="#0a64b8" d="M5.500 6Q7 .5 12.500 .5q5 0 6.500 5.500l-5 4z"></path><path fill="#1178d4" d="M5.500 16Q0 15.500 0 10.800 .5 6 5.500 5.500 8 5.500 10 7l5 3-6 6z"></path><path fill="#28a8ea" d="M5.500 16.300q-3 0-4.300-2.500L14 8.500q3-3 6-2.500 4 1.500 4 5.500-.5 4.800-5 4.800z"></path></svg>
      <div class="lang"><ui-text .w=${35}>ENG</ui-text><ui-text .w=${18}>IN</ui-text></div>
      ${icon(24, 18, svg`<path stroke-width="1.700" d="M1 6.500Q5.500 1.500 12 1.500T23 6.500M4.500 10Q7.500 6.300 12 6.300T19.500 10M7.800 13Q9.500 11 12 11t4.200 2"></path><circle cx="12" cy="15.500" r="1.700" fill="#1b1b1b" stroke-width=".5"></circle>`)}
      ${icon(24, 20, svg`<path stroke-width="1.700" d="M1 7v6.500h4l5 4.500V2.500L5 7zM13 7q1.800 3 0 6.500"></path><path stroke="#b6bfcb" stroke-width="1.700" d="M16.500 4.500q3.500 5.500 0 11.500M20 2q5 8 0 16.500"></path>`, "vol")}
      ${icon(25, 22, svg`<path stroke-width="1.800" d="M9 4.500h9.500q2.500 0 2.500 2.500v9q0 2.500-2.500 2.500H3.500Q1 18.500 1 16v-3.500"></path><path d="M22.500 9v5" stroke-width="2.500"></path><path fill="#1b1b1b" stroke-width=".6" d="M4.500 0L.3 7h3L2 12 7.500 4.500h-3zM3.500 16.300V13L8.500 9v7.300z"></path>`)}
      <div class="time"><ui-text .w=${42}>14:49</ui-text><ui-text .w=${92}>21/08/2023</ui-text></div>
      <div class="badge">4</div>
    </div>`;
  }
}

@customElement("app-root")
class AppRoot extends LitElement {
  static styles = css`
    :host { display: flex; flex-direction: column; width: 1920px; height: 1200px; overflow: hidden; background: #fff; font-family: "Open Sans", "Noto Sans", sans-serif; }
    .main { display: flex; flex: 1; min-height: 0; }
    browser-chrome, devops-header, task-bar { flex: none; }
  `;
  render() {
    return html`
      <browser-chrome></browser-chrome>
      <devops-header></devops-header>
      <div class="main"><project-nav></project-nav><wiki-tree></wiki-tree><wiki-page></wiki-page></div>
      <task-bar></task-bar>`;
  }
}
